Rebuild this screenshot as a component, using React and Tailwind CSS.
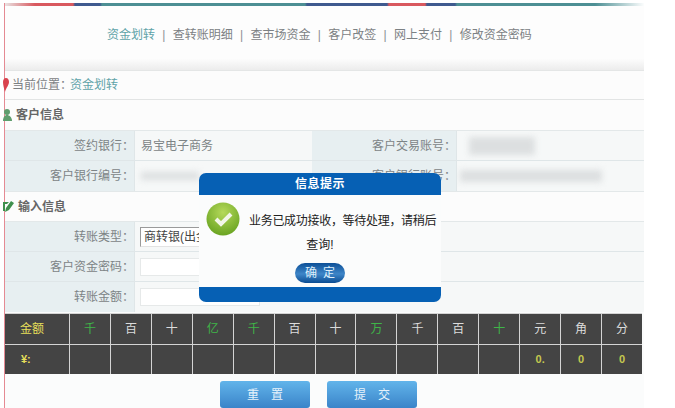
import React from "react";

const navItems = ["资金划转", "查转账明细", "查市场资金", "客户改签", "网上支付", "修改资金密码"];

const units = ["千", "百", "十", "亿", "千", "百", "十", "万", "千", "百", "十", "元", "角", "分"];
const greenIdx = [0, 3, 4, 7, 10];
const values = { 11: "0.", 12: "0", 13: "0" };

function SectionTitle({ icon, children, className }) {
  return (
    <div className={"flex items-center bg-[#fcfcfc] font-bold text-[12px] text-[#666] " + className}>
      {icon}
      <span>{children}</span>
    </div>
  );
}

function Label({ children }) {
  return (
    <div className="h-full flex items-center justify-end bg-[#e7eff1] border-r border-[#dfe6e8] text-[#7d8486]">
      {children}
    </div>
  );
}

function Value({ children }) {
  return <div className="h-full flex items-center pl-[6px] bg-[#f6f8f8] text-[#7d8486] overflow-hidden">{children}</div>;
}

function Smudge({ className }) {
  return <div className={"bg-[#dcdfe0] blur-[3px] " + className} />;
}

export default function App() {
  return (
    <div
      className="relative w-[675px] h-[408px] overflow-hidden bg-white text-[12px]"
      style={{ fontFamily: '"Liberation Sans", "Noto Sans CJK SC", sans-serif' }}
    >
      <div className="ml-[4px] mt-[3px] w-[640px] h-[405px] border-l border-[#e58a93] bg-[#fbfcfc] flex flex-col">
        {/* top colour strip */}
        <div className="h-[3px] bg-[linear-gradient(90deg,#e9e3e3_0px,#d9595f_30px,#d9595f_68px,#3f5a8f_70px,#3f5a8f_95px,#4d8f94_97px,#4d8f94_300px,#3f5a8f_302px,#3f5a8f_382px,#d9595f_384px,#d9595f_420px,#3f5a8f_422px,#3f5a8f_450px,#4d8f94_452px,#4d8f94_590px,#ffffff_640px)]" />

        {/* nav */}
        <div className="h-[65px] flex items-center pl-[102px] pb-[7px] bg-[linear-gradient(180deg,#fdfdfd_0%,#fdfdfd_82%,#ececec_100%)] text-[#7c8184] border-b border-[#e4e6e6]">
          {navItems.map((item, i) => (
            <React.Fragment key={item}>
              {i > 0 && <span className="mx-[7.3px] text-[#8a9094]">|</span>}
              <span className={i === 0 ? "text-[#5fa3a8]" : ""}>{item}</span>
            </React.Fragment>
          ))}
        </div>

        {/* breadcrumb */}
        <div className="h-[29px] flex items-center bg-[#fcfcfc] border-b border-[#e2e4e4] text-[#7c8184]">
          <svg width="6" height="14" viewBox="0 0 6 14" className="ml-[-2px] mr-[3px]">
            <path d="M3 0C5 0 6 2 6 4C6 7 3 10 2 14C1 10 0 7 0 4C0 2 1 0 3 0Z" fill="#d9434e" />
          </svg>
          <span>当前位置：</span>
          <span className="text-[#5fa3a8] ml-[-2px]">资金划转</span>
        </div>

        <SectionTitle
          className="h-[30px]"
          icon={
            <svg width="9" height="12" viewBox="0 0 9 12" className="ml-[-2px] mr-[4px]">
              <circle cx="4" cy="3" r="3" fill="#5f9e6e" />
              <path d="M0 12C0 8 2 6 4 6C6 6 9 8 9 12Z" fill="#5f9e6e" />
            </svg>
          }
        >
          客户信息
        </SectionTitle>

        {/* customer rows */}
        <div className="grid grid-cols-[130px_177px_145px_1fr] grid-rows-[30px_30px] border-y border-[#e3e8e9] h-[62px]">
          <div className="border-b border-[#dfe6e8]"><Label>签约银行：</Label></div>
          <div className="border-b border-[#dfe6e8]"><Value>易宝电子商务</Value></div>
          <div className="border-b border-[#dfe6e8]"><Label>客户交易账号：</Label></div>
          <div className="border-b border-[#dfe6e8]"><Value><Smudge className="w-[66px] h-[18px] ml-[6px]" /></Value></div>
          <Label>客户银行编号：</Label>
          <Value><Smudge className="w-[58px] h-[8px]" /></Value>
          <Label>客户银行账号：</Label>
          <Value><Smudge className="w-[142px] h-[12px] ml-[-3px]" /></Value>
        </div>

        <SectionTitle
          className="h-[29px]"
          icon={
            <svg width="11" height="13" viewBox="0 0 11 13" className="ml-[-2px] mr-[4px]">
              <path d="M0 2H6L4 4H2V11H0Z" fill="#3f8f4c" />
              <path d="M3 8L8 1L11 3L6 10L2 12Z" fill="#3f8f4c" />
            </svg>
          }
        >
          输入信息
        </SectionTitle>

        {/* input rows */}
        <div className="grid grid-cols-[130px_1fr] grid-rows-[30px_30px_30px] h-[91px] border-t border-[#e3e8e9] bg-[#f6f8f8]">
          <div className="border-b border-[#dfe6e8]"><Label>转账类型：</Label></div>
          <div className="border-b border-[#dfe6e8] flex items-center pl-[5px]">
            <div className="w-[120px] h-[20px] pl-[3px] flex items-center bg-white border border-[#9a9a9a] border-r-[#e3e3e3] border-b-[#e3e3e3] text-[#444] overflow-hidden whitespace-nowrap">
              商转银(出金)
            </div>
          </div>
          <div className="border-b border-[#dfe6e8]"><Label>客户资金密码：</Label></div>
          <div className="border-b border-[#dfe6e8] flex items-center pl-[5px]">
            <div className="w-[120px] h-[18px] bg-white border border-[#e6e9e9]" />
          </div>
          <Label>转账金额：</Label>
          <div className="flex items-center pl-[5px]">
            <div className="w-[120px] h-[18px] bg-white border border-[#e6e9e9]" />
          </div>
        </div>

        {/* amount table */}
        <div className="mt-[1px] h-[61px] w-[637px] grid grid-cols-[64px_repeat(14,1fr)] grid-rows-[30px_29px] gap-[1px] bg-[#d4d4d4] border-y border-[#d4d4d4] text-white">
          <div className="bg-[#444] flex items-center pl-[15px] text-[#e6df5a]">金额</div>
          {units.map((u, i) => (
            <div
              key={i}
              className={"bg-[#444] flex items-center justify-center " + (greenIdx.includes(i) ? "text-[#3fb548]" : "text-[#dcdcdc]")}
            >
              {u}
            </div>
          ))}
          <div className="bg-[#444] flex items-center pl-[16px] text-[#e6df5a] text-[11px] font-bold">¥:</div>
          {units.map((_, i) => (
            <div key={i} className="bg-[#444] flex items-center justify-center text-[#c4c94f] font-bold text-[11px]">
              {values[i]}
            </div>
          ))}
        </div>

        {/* buttons */}
        <div className="mt-[7px] flex pl-[215px] gap-[17px]">
          <button className="w-[90px] h-[27px] rounded-[3px] bg-[linear-gradient(180deg,#62b4ea_0%,#3a84c9_100%)] text-[#e6f2fb] tracking-[12px] pl-[12px]">重置</button>
          <button className="w-[90px] h-[27px] rounded-[3px] bg-[linear-gradient(180deg,#62b4ea_0%,#3a84c9_100%)] text-[#e6f2fb] tracking-[12px] pl-[12px]">提交</button>
        </div>
      </div>

      {/* modal */}
      <div className="absolute left-[199px] top-[173px] w-[242px] h-[129px] rounded-[7px] overflow-hidden flex flex-col bg-[#fbfcfc]">
        <div className="h-[22px] bg-[#0660b4] text-white font-bold flex items-center justify-center tracking-[0.5px]">信息提示</div>
        <div className="flex-1 relative text-[#222]">
          <svg width="34" height="34" viewBox="0 0 34 34" className="absolute left-[7px] top-[7px]">
            <defs>
              <radialGradient id="okBall" cx="50%" cy="30%" r="75%">
                <stop offset="0%" stopColor="#b5d95a" />
                <stop offset="100%" stopColor="#64a01e" />
              </radialGradient>
            </defs>
            <circle cx="17" cy="17" r="16.5" fill="url(#okBall)" />
            <path d="M10 17L15 22L25 12" fill="none" stroke="#f2f6e8" strokeWidth="4" />
          </svg>
          <p className="absolute left-[50px] top-[17px] whitespace-nowrap tracking-[-0.3px]">业务已成功接收，等待处理，请稍后</p>
          <p className="absolute left-0 right-0 top-[41px] text-center">查询!</p>
          <button className="absolute left-[96px] top-[68px] w-[50px] h-[20px] rounded-[10px] bg-[linear-gradient(180deg,#0c4f97_0%,#3e86c8_55%,#0b4c93_100%)] text-[#dff0fb] text-[12px] tracking-[6px] pl-[6px] leading-none">
            确定
          </button>
        </div>
        <div className="h-[15px] bg-[#0660b4]" />
      </div>
    </div>
  );
}
